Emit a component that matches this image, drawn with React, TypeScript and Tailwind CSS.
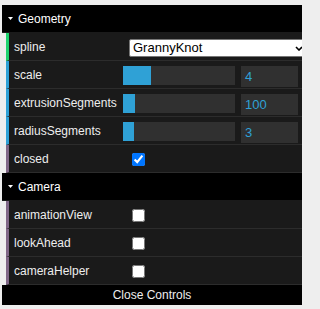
import { useState } from "react";

type Kind = "option" | "number" | "boolean";

const borderColors: Record<Kind, string> = {
    option: "border-l-[#1ed36f]",
    number: "border-l-[#2fa1d6]",
    boolean: "border-l-[#806787]",
};

const FolderTitle = ({ name }: { name: string }) => (
    <div className="flex items-center h-[28px] bg-black border-b border-[#1a1a1a] pl-[6px] text-white">
        <svg width="5" height="3" viewBox="0 0 5 3" className="shrink-0">
            <path d="M0 0 L5 0 L2.5 3 Z" fill="#ffffff" />
        </svg>
        <span className="ml-[5px]">{name}</span>
    </div>
);

const Row = ({ kind, label, children }: { kind: Kind; label: string; children: React.ReactNode }) => (
    <div
        className={`flex items-center h-[28px] bg-[#1a1a1a] border-b border-b-[#2c2c2c] border-l-[3px] ${borderColors[kind]} pl-[5px] pr-[4px]`}
    >
        <span className="w-[109px] shrink-0 text-[#eeeeee] whitespace-nowrap">{label}</span>
        {children}
    </div>
);

const NumberControl = ({ value, fill }: { value: number; fill: number }) => (
    <>
        <div className="self-start mt-[5px] w-[112px] h-[19px] bg-[#303030] shrink-0">
            <div className="h-full bg-[#2fa1d6]" style={{ width: `${fill}px` }} />
        </div>
        <div className="self-start mt-[5px] ml-[6px] w-[57px] h-[21px] bg-[#303030] pl-[4px] text-[13px] leading-[21px] text-[#2fa1d6] shrink-0">
            {value}
        </div>
    </>
);

const Check = ({ initial }: { initial: boolean }) => {
    const [checked, setChecked] = useState(initial);
    return (
        <input
            type="checkbox"
            checked={checked}
            onChange={(e) => setChecked(e.target.checked)}
            className="ml-[9px] mt-[2px] w-[13px] h-[13px] shrink-0"
        />
    );
};

export default function App() {
    return (
        <div className="min-h-screen bg-[#eeeeee] pt-[5px] pl-[2px] font-['Liberation_Sans',Arial,sans-serif] text-[12px]">
            <div className="w-[300px] overflow-hidden">
                <FolderTitle name="Geometry" />
                <div className="pl-[4px]">
                    <Row kind="option" label="spline">
                        <div className="relative self-start mt-[6px] ml-[6px] w-[178px] h-[18px] shrink-0 bg-white border border-[#767676] rounded-[2px] pl-[3px] text-[13px] leading-[16px] text-black">
                            GrannyKnot
                            <svg
                                width="8"
                                height="5"
                                viewBox="0 0 8 5"
                                className="absolute right-[3px] top-[6px]"
                            >
                                <path d="M1 1 L4 4 L7 1" fill="none" stroke="#000" strokeWidth="1.6" />
                            </svg>
                        </div>
                    </Row>
                    <Row kind="number" label="scale">
                        <NumberControl value={4} fill={28} />
                    </Row>
                    <Row kind="number" label="extrusionSegments">
                        <NumberControl value={100} fill={12} />
                    </Row>
                    <Row kind="number" label="radiusSegments">
                        <NumberControl value={3} fill={11} />
                    </Row>
                    <Row kind="boolean" label="closed">
                        <Check initial={true} />
                    </Row>
                </div>
                <FolderTitle name="Camera" />
                <div className="pl-[4px]">
                    <Row kind="boolean" label="animationView">
                        <Check initial={false} />
                    </Row>
                    <Row kind="boolean" label="lookAhead">
                        <Check initial={false} />
                    </Row>
                    <Row kind="boolean" label="cameraHelper">
                        <Check initial={false} />
                    </Row>
                </div>
                <div className="h-[20px] bg-black text-center leading-[20px] text-[#eeeeee]">Close Controls</div>
            </div>
        </div>
    );
}
